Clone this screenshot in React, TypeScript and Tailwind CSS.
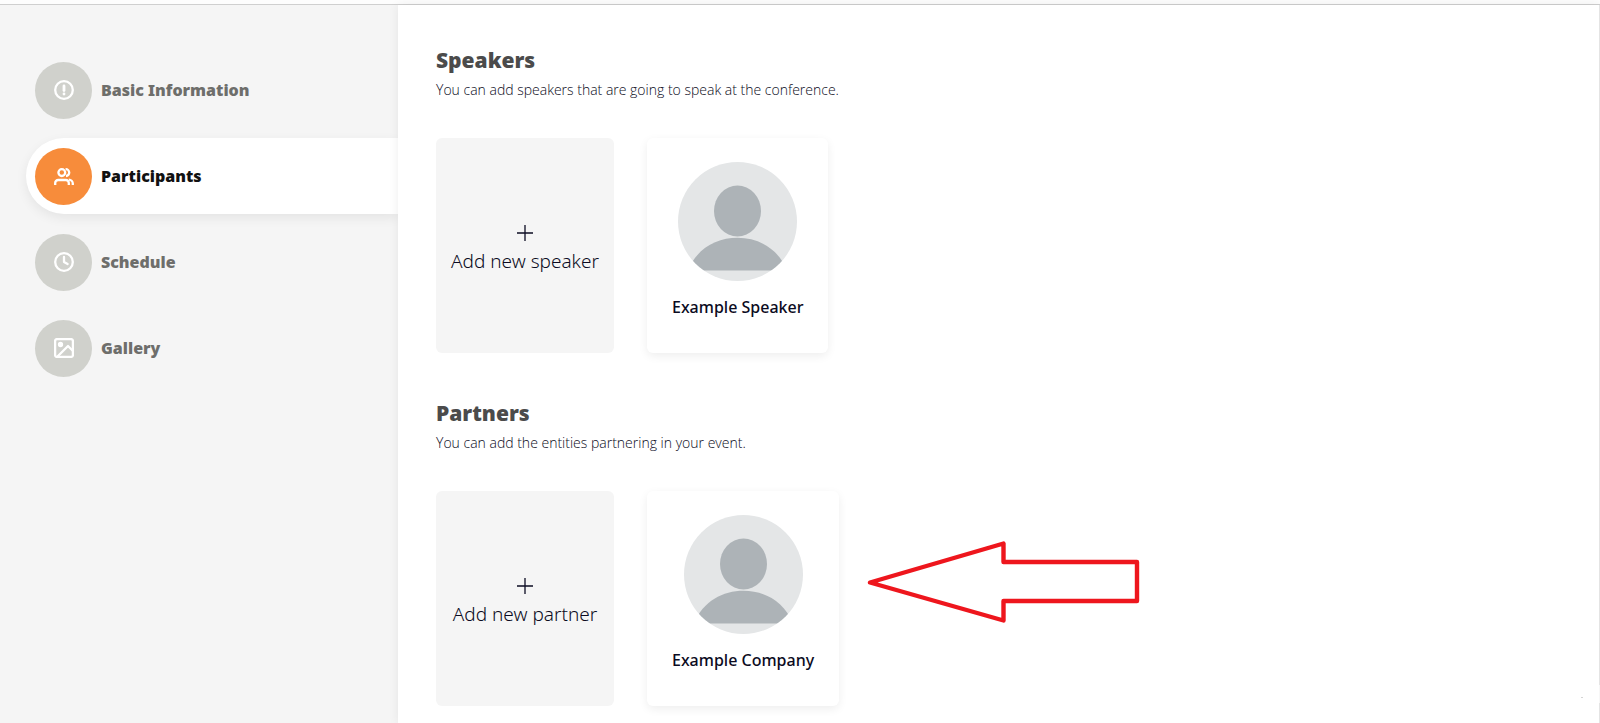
import type { ReactNode } from 'react';
import clsx from 'clsx';

const stroke = {
  fill: 'none',
  stroke: 'currentColor',
  strokeWidth: 2.3,
  strokeLinecap: 'round',
  strokeLinejoin: 'round',
} as const;

function InfoIcon() {
  return (
    <svg width="20" height="20" viewBox="0 0 20 20" {...stroke}>
      <circle cx="10" cy="10" r="8.8" />
      <path d="M10 6v4.5" strokeWidth="2.8" />
      <path d="M10 14v.1" strokeWidth="2.8" />
    </svg>
  );
}

function PeopleIcon() {
  return (
    <svg width="20" height="17" viewBox="0 0 20 17" {...stroke} strokeLinecap="butt">
      <circle cx="7.8" cy="4.6" r="3.4" />
      <path d="M11.6 1.2a3.4 3.4 0 0 1 .4 6.800" />
      <path d="M1.2 17v-2a3 3 0 0 1 3-3h7.600a3 3 0 0 1 3 3v2" />
      <path d="M14.800 11.600a4 4 0 0 1 4 4V17" />
    </svg>
  );
}

function ClockIcon() {
  return (
    <svg width="20" height="20" viewBox="0 0 20 20" {...stroke}>
      <circle cx="10" cy="10" r="8.8" />
      <path d="M10 5v5l3.6 2" />
    </svg>
  );
}

function ImageIcon() {
  return (
    <svg width="20" height="20" viewBox="0 0 20 20" {...stroke}>
      <rect x="1.1" y="1.1" width="17.8" height="17.8" rx="2" />
      <circle cx="6.5" cy="6.5" r="1.5" fill="currentColor" />
      <path d="M19 13l-5-5L3 19" />
    </svg>
  );
}

function Avatar() {
  return (
    <div className="size-[119px] overflow-hidden rounded-full bg-[#e4e6e7]">
      <svg className="size-full" viewBox="0 0 119 119" fill="#adb3b7">
        <ellipse cx="59.5" cy="49" rx="23.5" ry="25.5" />
        <path d="M10 108.500C19 86 39 75.800 59.500 75.800S100 86 109 108.500Z" />
      </svg>
    </div>
  );
}

const steps: { label: string; icon: ReactNode; active?: boolean }[] = [
  { label: 'Basic Information', icon: <InfoIcon /> },
  { label: 'Participants', icon: <PeopleIcon />, active: true },
  { label: 'Schedule', icon: <ClockIcon /> },
  { label: 'Gallery', icon: <ImageIcon /> },
];

function Sidebar() {
  return (
    <nav className="w-[398px] shrink-0 overflow-hidden bg-[#f5f5f5] pt-[47px] pl-[26px]">
      <ul className="flex flex-col gap-2.5">
        {steps.map((step) => (
          <li key={step.label}>
            <a
              href="#"
              className={clsx(
                'flex h-[76px] items-center gap-[9px] rounded-l-full pl-[9px] text-[16px] font-black',
                step.active
                  ? 'bg-white text-[#111111] shadow-[0_4px_12px_rgba(0,0,0,0.07)]'
                  : 'text-[#6e6e6b]'
              )}
            >
              <span
                className={clsx(
                  'flex size-[57px] items-center justify-center rounded-full text-white',
                  step.active ? 'bg-[#f78c3b]' : 'bg-[#d0d1cc]'
                )}
              >
                {step.icon}
              </span>
              {step.label}
            </a>
          </li>
        ))}
      </ul>
    </nav>
  );
}

type SectionProps = {
  title: string;
  description: string;
  addLabel: string;
  name: string;
};

function ParticipantSection({ title, description, addLabel, name }: SectionProps) {
  return (
    <section>
      <h2 className="text-[21px] leading-8 font-black text-[#4b4b4b]">{title}</h2>
      <p className="mt-0.5 font-['Open_Sans',sans-serif] text-[14px] leading-6 font-light text-[#0b0b22]">
        {description}
      </p>
      <div className="mt-9 flex gap-[33px]">
        <button
          type="button"
          className="flex h-[215px] w-[178px] flex-col items-center justify-center rounded-md bg-[#f5f5f5] pt-0.5 text-[19px] leading-7 font-light text-[#0b0b22]"
        >
          <svg className="my-1.5" width="16" height="16" viewBox="0 0 16 16" {...stroke} strokeWidth="1.3" strokeLinecap="butt">
            <path d="M8 0v16M0 8h16" />
          </svg>
          {addLabel}
        </button>
        <div className="flex h-[215px] flex-col items-center rounded-md bg-white px-[25px] pt-6 shadow-[0_3px_10px_rgba(0,0,0,0.07)]">
          <Avatar />
          <p className="mt-3 text-[16px] leading-7 font-medium text-[#0b0b22]">{name}</p>
        </div>
      </div>
    </section>
  );
}

function Arrow() {
  return (
    <svg
      className="absolute top-[540px] left-[866px]"
      width="276"
      height="84"
      viewBox="0 0 276 84"
      fill="none"
      stroke="#ee161d"
      strokeWidth="4.4"
      strokeLinejoin="round"
    >
      <path d="M4 42.500L137.500 3.500V22H271V61H137.500V80.500Z" />
    </svg>
  );
}

export default function App() {
  return (
    <div className="relative flex h-screen flex-col overflow-hidden bg-white font-['Noto_Sans',sans-serif]">
      <header className="h-[5px] shrink-0 border-b border-[#cfcfcf] bg-[#fdfdfd]" />
      <div className="flex grow">
        <Sidebar />
        <main className="flex grow flex-col gap-11 bg-white pt-[39px] pl-[38px] shadow-[0_0_10px_rgba(0,0,0,0.07)]">
          <ParticipantSection
            title="Speakers"
            description="You can add speakers that are going to speak at the conference."
            addLabel="Add new speaker"
            name="Example Speaker"
          />
          <ParticipantSection
            title="Partners"
            description="You can add the entities partnering in your event."
            addLabel="Add new partner"
            name="Example Company"
          />
        </main>
        <div className="flex w-px flex-col">
          <span className="grow bg-[#e4e4e4]" />
          <span className="h-[18px]" />
          <span className="h-5 bg-[#e4e4e4]" />
        </div>
      </div>
      <Arrow />
      <span className="absolute right-[17px] bottom-[25px] h-px w-0.5 bg-[#d4d4d4]" />
    </div>
  );
}
